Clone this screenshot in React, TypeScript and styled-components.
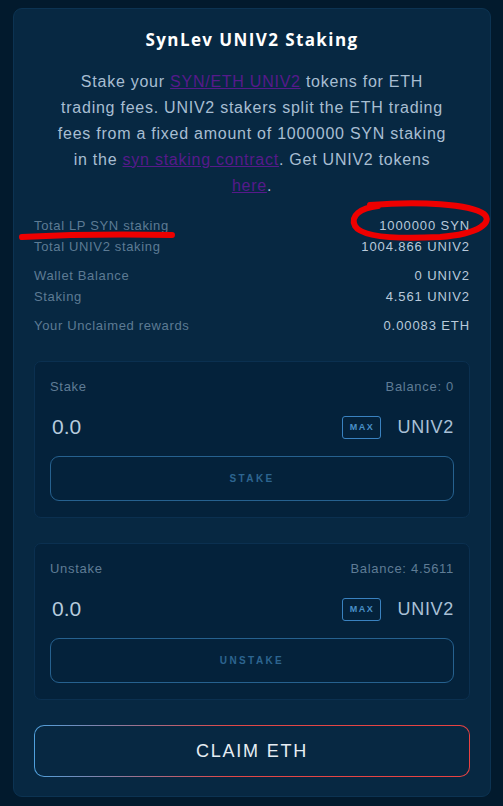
import React from "react";
import styled, { createGlobalStyle } from "styled-components";

const GlobalStyle = createGlobalStyle`
  html, body {
    margin: 0;
    padding: 0;
    background: #021a2d;
  }
  * {
    box-sizing: border-box;
  }
`;

const Page = styled.div`
  position: relative;
  min-height: 806px;
  padding: 8px 12px 10px 13px;
  font-family: "Liberation Sans", Arial, sans-serif;
`;

const Card = styled.div`
  background: #072842;
  border: 1px solid #0c3352;
  border-radius: 9px;
  padding: 19px 20px 19px 20px;
  display: flex;
  flex-direction: column;
`;

const Title = styled.h2`
  margin: 0;
  text-align: center;
  font-family: "Open Sans", sans-serif;
  font-size: 17px;
  font-weight: 700;
  letter-spacing: 1.4px;
  color: #ffffff;
  line-height: 24px;
`;

const Intro = styled.p`
  margin: 17px 20px 0;
  text-align: center;
  font-size: 16px;
  line-height: 26px;
  letter-spacing: 0.75px;
  color: #a8bed2;
`;

const Link = styled.a`
  color: #561a8b;
  text-decoration: underline;
`;

const Stats = styled.div`
  margin-top: 16px;
  display: flex;
  flex-direction: column;
  gap: 8px;
`;

const StatGroup = styled.div`
  display: flex;
  flex-direction: column;
`;

const StatRow = styled.div`
  display: flex;
  justify-content: space-between;
  align-items: center;
  height: 21px;
  font-size: 13px;
`;

const StatLabel = styled.span`
  color: #5d7b94;
  letter-spacing: 0.65px;
`;

const StatValue = styled.span`
  color: #b9cadb;
  letter-spacing: 0.9px;
`;

const Panel = styled.div<{ $top: number }>`
  margin-top: ${(p) => p.$top}px;
  background: #04223b;
  border: 1px solid #0b3050;
  border-radius: 7px;
  padding: 15px 15px 16px 15px;
  display: flex;
  flex-direction: column;
`;

const PanelHead = styled.div`
  display: flex;
  justify-content: space-between;
  font-size: 13px;
  letter-spacing: 0.7px;
  color: #5f7c95;
  line-height: 20px;
`;

const InputRow = styled.div`
  display: flex;
  align-items: center;
  margin-top: 18px;
  height: 24px;
`;

const Amount = styled.span`
  flex: 1;
  padding-left: 2px;
  font-size: 21px;
  color: #b6cbdd;
`;

const MaxButton = styled.span`
  width: 39px;
  height: 23px;
  border: 1px solid #3a82c0;
  border-radius: 3px;
  display: flex;
  align-items: center;
  justify-content: center;
  font-size: 9px;
  font-weight: 700;
  letter-spacing: 1.5px;
  color: #4a90c8;
`;

const Unit = styled.span`
  margin-left: 16px;
  font-size: 18px;
  letter-spacing: 0.7px;
  color: #a9c0d6;
`;

const ActionButton = styled.div`
  margin-top: 17px;
  height: 45px;
  border: 1px solid #26618f;
  border-radius: 9px;
  display: flex;
  align-items: center;
  justify-content: center;
  font-size: 10px;
  font-weight: 700;
  letter-spacing: 2.4px;
  color: #2d6590;
`;

const ClaimButton = styled.div`
  margin-top: 25px;
  height: 52px;
  border-radius: 10px;
  border: 1px solid transparent;
  background:
    linear-gradient(#072842, #072842) padding-box,
    linear-gradient(90deg, #4fa0dc 0%, #e04848 45%, #e84242 100%) border-box;
  display: flex;
  align-items: center;
  justify-content: center;
  font-size: 18px;
  letter-spacing: 1.8px;
  color: #e6edf3;
`;

const Marks = styled.svg`
  position: absolute;
  left: 0;
  top: 0;
  pointer-events: none;
`;

const stats = [
  [
    ["Total LP SYN staking", "1000000 SYN"],
    ["Total UNIV2 staking", "1004.866 UNIV2"],
  ],
  [
    ["Wallet Balance", "0 UNIV2"],
    ["Staking", "4.561 UNIV2"],
  ],
  [["Your Unclaimed rewards", "0.00083 ETH"]],
];

const StakePanel = ({ label, balance, action, top }: any) => (
  <Panel $top={top}>
    <PanelHead>
      <span>{label}</span>
      <span>Balance: {balance}</span>
    </PanelHead>
    <InputRow>
      <Amount>0.0</Amount>
      <MaxButton>MAX</MaxButton>
      <Unit>UNIV2</Unit>
    </InputRow>
    <ActionButton>{action}</ActionButton>
  </Panel>
);

export default function App() {
  return (
    <>
      <GlobalStyle />
      <Page>
        <Card>
          <Title>SynLev UNIV2 Staking</Title>
          <Intro>
            Stake your <Link href="#">SYN/ETH UNIV2</Link> tokens for ETH
            trading fees. UNIV2 stakers split the ETH trading fees from a fixed
            amount of 1000000 SYN staking in the{" "}
            <Link href="#">syn staking contract</Link>. Get UNIV2 tokens{" "}
            <Link href="#">here</Link>.
          </Intro>
          <Stats>
            {stats.map((group, i) => (
              <StatGroup key={i}>
                {group.map(([label, value]) => (
                  <StatRow key={label}>
                    <StatLabel>{label}</StatLabel>
                    <StatValue>{value}</StatValue>
                  </StatRow>
                ))}
              </StatGroup>
            ))}
          </Stats>
          <StakePanel label="Stake" balance="0" action="STAKE" top={25} />
          <StakePanel label="Unstake" balance="4.5611" action="UNSTAKE" top={25} />
          <ClaimButton>CLAIM ETH</ClaimButton>
        </Card>
        {/* hand-drawn markup over the stats */}
        <Marks width="503" height="806" viewBox="0 0 503 806">
          <path
            d="M22 237 C60 235, 120 234, 172 235"
            stroke="#ee0000"
            strokeWidth="6"
            strokeLinecap="round"
            fill="none"
          />
          <path
            d="M370 205 C420 201, 470 204, 484 214 C493 222, 480 234, 440 237 C400 239, 362 238, 355 226 C350 216, 360 208, 378 206"
            stroke="#ee0000"
            strokeWidth="6"
            strokeLinecap="round"
            fill="none"
          />
        </Marks>
      </Page>
    </>
  );
}
